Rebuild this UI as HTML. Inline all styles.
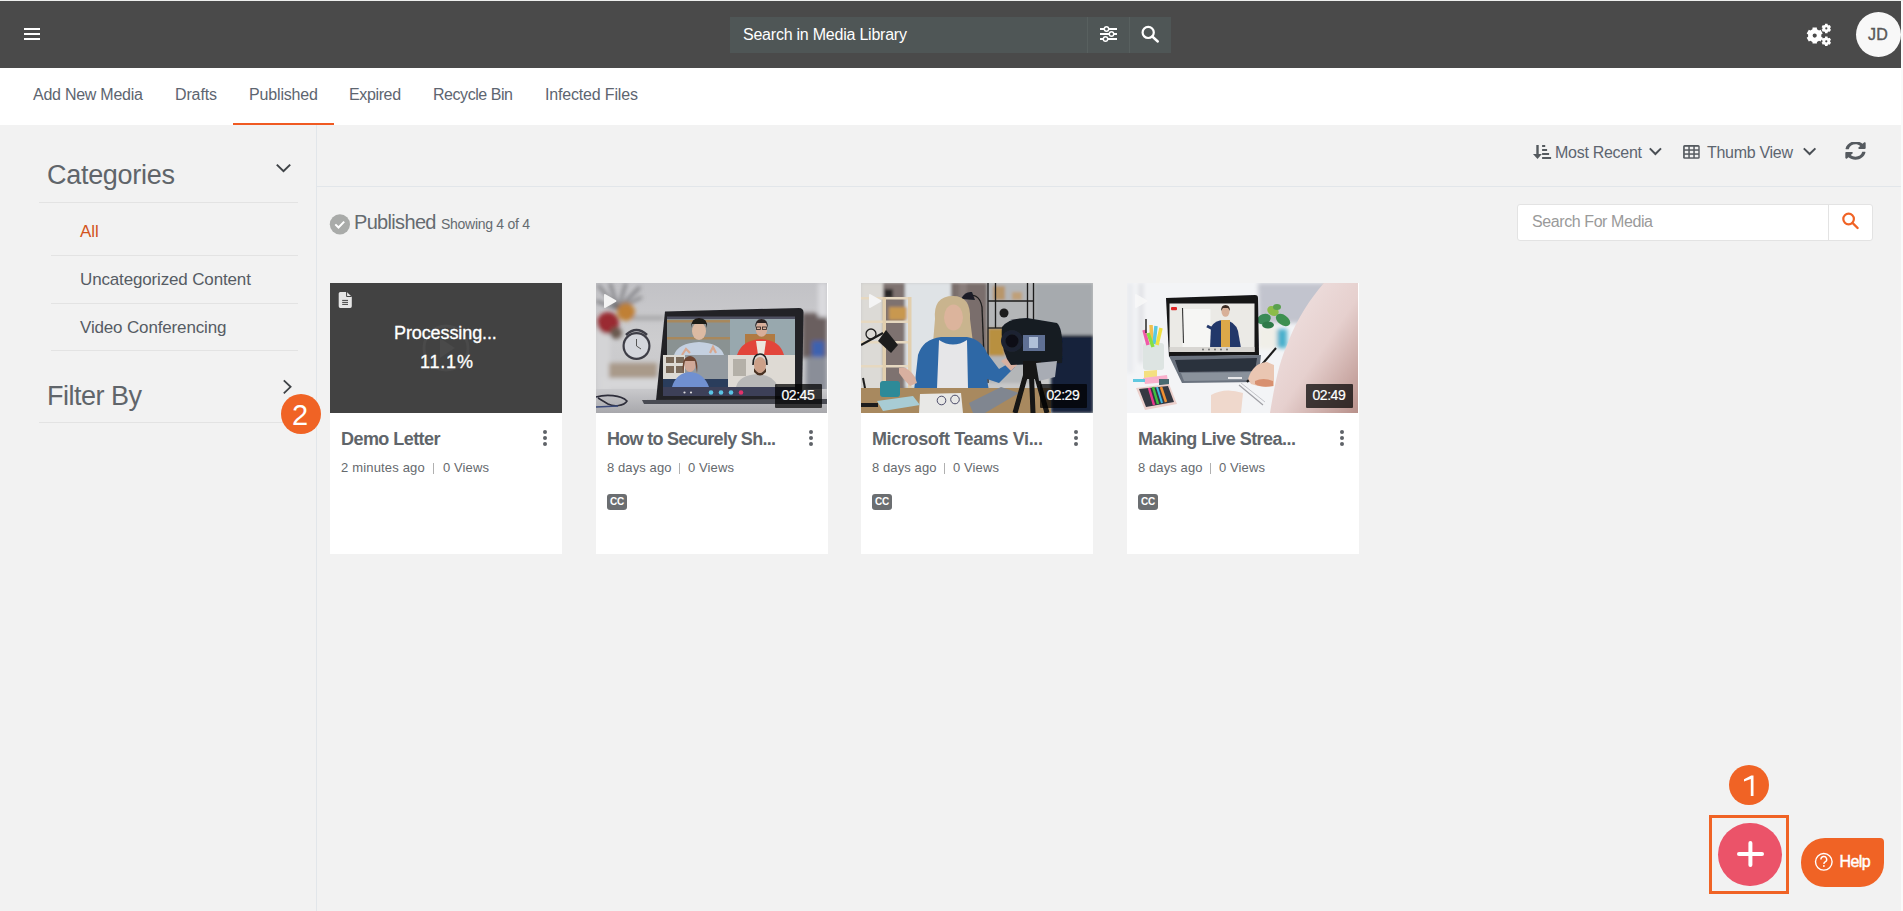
<!DOCTYPE html>
<html><head><meta charset="utf-8">
<style>
*{margin:0;padding:0;box-sizing:border-box}
html,body{width:1903px;height:911px;overflow:hidden;background:#fafafa}
body{font-family:"Liberation Sans",sans-serif;position:relative}
.a{position:absolute}
.t{position:absolute;white-space:nowrap;line-height:1}
#page{position:absolute;left:0;top:0;width:1901px;height:911px;background:#f2f2f2;overflow:hidden}
#topline{position:absolute;left:0;top:0;width:1903px;height:1px;background:#eef0ee}
#hdr{position:absolute;left:0;top:1px;width:1901px;height:67px;background:#4a4a4a}
#tabs{position:absolute;left:0;top:68px;width:1901px;height:57px;background:#fff}
.tab{font-size:16px;color:#5d6570;top:86.5px}
.sep{position:absolute;height:1px;background:#e3e3e3}
.card{position:absolute;top:283px;width:232px;height:271px;background:#fff}
.thumb{position:absolute;left:0;top:0;width:232px;height:130px;overflow:hidden}
.ctitle{font-size:18px;font-weight:700;color:#60656a;top:146.9px;left:11px}
.meta{font-size:13px;color:#65696d;top:178.3px;left:11px}
.kebab{position:absolute;top:147px;width:4px;height:16px}
.kebab i{position:absolute;left:0;width:4.2px;height:4.2px;border-radius:50%;background:#5f6368}
.pipe{position:absolute;top:180px;width:1.3px;height:10.5px;background:#b0b0b0}
.cc{position:absolute;left:11px;top:211px;width:20px;height:16px;border-radius:3px;background:#6b6e71;color:#fff;font-size:10px;font-weight:700;line-height:16px;text-align:center;letter-spacing:-0.3px}
.dur{position:absolute;top:101px;height:24px;background:rgba(0,0,0,.72);border-radius:1px}
.dur span{position:absolute;left:6.5px;top:3.8px;font-size:14px;color:#fff;line-height:1;letter-spacing:-0.45px;-webkit-text-stroke:0.2px #fff}
</style></head><body>
<div id="page">
  <div id="hdr">
    <!-- hamburger -->
    <div class="a" style="left:24px;top:27px;width:16px;height:2px;background:#fff"></div>
    <div class="a" style="left:24px;top:32px;width:16px;height:2px;background:#fff"></div>
    <div class="a" style="left:24px;top:37px;width:16px;height:2px;background:#fff"></div>
    <!-- search -->
    <div class="a" style="left:730px;top:16px;width:441px;height:36px;background:#4f5656"></div>
    <div class="a" style="left:1087px;top:16px;width:1px;height:36px;background:#58605f"></div>
    <div class="a" style="left:1129px;top:16px;width:1px;height:36px;background:#58605f"></div>
    <div class="t" style="left:743px;top:25.5px;font-size:16px;color:#fff;letter-spacing:-0.23px">Search in Media Library</div>
    <svg class="a" style="left:1096px;top:20px" width="26" height="26" viewBox="1096 21 26 26">
      <g stroke="#fff" stroke-width="2" fill="none">
        <line x1="1100" y1="29" x2="1117" y2="29"/><line x1="1100" y1="34" x2="1117" y2="34"/><line x1="1100" y1="39" x2="1117" y2="39"/>
      </g>
      <g fill="#4f5656" stroke="#fff" stroke-width="1.4">
        <circle cx="1106.5" cy="29" r="2.2"/><circle cx="1111.5" cy="34" r="2.2"/><circle cx="1105.5" cy="39" r="2.2"/>
      </g>
    </svg>
    <svg class="a" style="left:1138px;top:20px" width="26" height="26" viewBox="1138 21 26 26">
      <circle cx="1148.2" cy="32.4" r="5.6" fill="none" stroke="#fff" stroke-width="2.2"/>
      <line x1="1152.3" y1="36.5" x2="1157.8" y2="41.5" stroke="#fff" stroke-width="2.4" stroke-linecap="round"/>
    </svg>
    <svg class="a" style="left:1800px;top:16px" width="40" height="40" viewBox="1800 17 40 40">
      <g fill="#fff">
        <path fill-rule="evenodd" d="M1812.43,29.30 L1812.55,27.58 L1816.85,27.58 L1816.97,29.30 L1819.02,30.48 L1820.57,29.73 L1822.72,33.45 L1821.29,34.41 L1821.29,36.79 L1822.72,37.75 L1820.57,41.47 L1819.02,40.72 L1816.97,41.90 L1816.85,43.62 L1812.55,43.62 L1812.43,41.90 L1810.38,40.72 L1808.83,41.47 L1806.68,37.75 L1808.11,36.79 L1808.11,34.41 L1806.68,33.45 L1808.83,29.73 L1810.38,30.48Z M1816.80,35.60 A2.1,2.1 0 1,0 1812.60,35.60 A2.1,2.1 0 1,0 1816.80,35.60Z M1824.98,24.73 L1825.03,23.67 L1827.57,23.67 L1827.62,24.73 L1828.82,25.42 L1829.76,24.94 L1831.03,27.13 L1830.14,27.71 L1830.14,29.09 L1831.03,29.67 L1829.76,31.86 L1828.82,31.38 L1827.62,32.07 L1827.57,33.13 L1825.03,33.13 L1824.98,32.07 L1823.78,31.38 L1822.84,31.86 L1821.57,29.67 L1822.46,29.09 L1822.46,27.71 L1821.57,27.13 L1822.84,24.94 L1823.78,25.42Z M1827.40,28.40 A1.1,1.1 0 1,0 1825.20,28.40 A1.1,1.1 0 1,0 1827.40,28.40Z M1824.98,37.63 L1825.03,36.57 L1827.57,36.57 L1827.62,37.63 L1828.82,38.32 L1829.76,37.84 L1831.03,40.03 L1830.14,40.61 L1830.14,41.99 L1831.03,42.57 L1829.76,44.76 L1828.82,44.28 L1827.62,44.97 L1827.57,46.03 L1825.03,46.03 L1824.98,44.97 L1823.78,44.28 L1822.84,44.76 L1821.57,42.57 L1822.46,41.99 L1822.46,40.61 L1821.57,40.03 L1822.84,37.84 L1823.78,38.32Z M1827.40,41.30 A1.1,1.1 0 1,0 1825.20,41.30 A1.1,1.1 0 1,0 1827.40,41.30Z"/>
      </g>
    </svg>
    <div class="a" style="left:1855.5px;top:11px;width:45px;height:45px;border-radius:50%;background:#f8f8f8"></div>
    <div class="t" style="left:1868px;top:25.5px;font-size:16px;color:#595959;letter-spacing:0.3px;-webkit-text-stroke:0.4px #595959">JD</div>
  </div>
  <div id="tabs">
    <div class="t tab" style="left:33px;top:18.5px;letter-spacing:-0.25px">Add New Media</div>
    <div class="t tab" style="left:175px;top:18.5px;letter-spacing:-0.13px">Drafts</div>
    <div class="t tab" style="left:249px;top:18.5px;letter-spacing:-0.16px">Published</div>
    <div class="t tab" style="left:349px;top:18.5px;letter-spacing:-0.37px">Expired</div>
    <div class="t tab" style="left:433px;top:18.5px;letter-spacing:-0.45px">Recycle Bin</div>
    <div class="t tab" style="left:545px;top:18.5px;letter-spacing:-0.17px">Infected Files</div>
    <div class="a" style="left:233px;top:55px;width:101px;height:2px;background:#f05a22"></div>
  </div>
  <!-- sidebar -->
  <div class="a" style="left:316px;top:125px;width:1px;height:786px;background:#e2e6ea"></div>
  <div class="t" style="left:47px;top:162px;font-size:27px;color:#60656a;letter-spacing:-0.29px">Categories</div>
  <div class="sep" style="left:39px;top:202px;width:259px"></div>
  <div class="t" style="left:80px;top:223.3px;font-size:17px;color:#d3541c">All</div>
  <div class="sep" style="left:51px;top:255px;width:247px"></div>
  <div class="t" style="left:80px;top:270.7px;font-size:17px;color:#565c64;letter-spacing:-0.15px">Uncategorized Content</div>
  <div class="sep" style="left:51px;top:303px;width:247px"></div>
  <div class="t" style="left:80px;top:318.6px;font-size:17px;color:#565c64;letter-spacing:-0.15px">Video Conferencing</div>
  <div class="sep" style="left:51px;top:350px;width:247px"></div>
  <div class="t" style="left:47px;top:383px;font-size:27px;color:#60656a;letter-spacing:-0.5px">Filter By</div>
  <div class="sep" style="left:39px;top:422px;width:259px"></div>
  <svg class="a" style="left:270px;top:155px" width="30" height="25" viewBox="270 155 30 25"><polyline points="276.8,164.6 283.5,171.2 290.2,164.6" fill="none" stroke="#3f4347" stroke-width="2"/></svg>
  <svg class="a" style="left:276px;top:374px" width="24" height="24" viewBox="276 374 24 24"><polyline points="283.8,380.3 290.6,386.8 283.8,393.3" fill="none" stroke="#3f4347" stroke-width="1.8"/></svg>

  <!-- toolbar -->
  <div class="a" style="left:316px;top:186px;width:1585px;height:1px;background:#e2e6ea"></div>
  <div class="t" style="left:1555px;top:144.5px;font-size:16px;color:#5d6570;letter-spacing:-0.28px">Most Recent</div>
  <div class="t" style="left:1707px;top:144.5px;font-size:16px;color:#5d6570;letter-spacing:-0.29px">Thumb View</div>
  <svg class="a" style="left:1528px;top:138px" width="30" height="26" viewBox="1528 138 30 26">
    <g fill="#555a5f">
      <rect x="1536.3" y="145" width="2.4" height="11"/>
      <polygon points="1533,154 1541.9,154 1537.5,158.9"/>
      <rect x="1542.1" y="145" width="3.1" height="2"/>
      <rect x="1542.1" y="149" width="5" height="2"/>
      <rect x="1542.1" y="153" width="7" height="2"/>
      <rect x="1542.1" y="157" width="9" height="2"/>
    </g>
  </svg>
    <svg class="a" style="left:1640px;top:140px" width="30" height="25" viewBox="1640 140 30 25"><polyline points="1649.8,148.4 1655.4,154 1661,148.4" fill="none" stroke="#4a4f55" stroke-width="2"/></svg>
  <svg class="a" style="left:1795px;top:140px" width="30" height="25" viewBox="1795 140 30 25"><polyline points="1803.8,148.4 1809.6,154 1815.4,148.4" fill="none" stroke="#4a4f55" stroke-width="2"/></svg>
  <svg class="a" style="left:1678px;top:138px" width="30" height="26" viewBox="1678 138 30 26">
    <rect x="1683.1" y="144.9" width="16.6" height="13.9" rx="1.5" fill="#555a5f"/>
    <g fill="#f2f2f2">
      <rect x="1684.8" y="146.8" width="3.5" height="2.5"/><rect x="1689.8" y="146.8" width="3.5" height="2.5"/><rect x="1694.8" y="146.8" width="3.5" height="2.5"/>
      <rect x="1684.8" y="150.8" width="3.5" height="2.5"/><rect x="1689.8" y="150.8" width="3.5" height="2.5"/><rect x="1694.8" y="150.8" width="3.5" height="2.5"/>
      <rect x="1684.8" y="154.8" width="3.5" height="2.5"/><rect x="1689.8" y="154.8" width="3.5" height="2.5"/><rect x="1694.8" y="154.8" width="3.5" height="2.5"/>
    </g>
  </svg>
  <svg class="a" style="left:1845px;top:142px" width="21" height="18" viewBox="0 0 512 460" preserveAspectRatio="none">
    <g transform="translate(0,-26) scale(1,0.95)"><path fill="#555a5f" d="M370.72 133.28C339.458 104.008 298.888 87.962 255.848 88c-77.458.068-144.328 53.178-162.791 126.85-1.344 5.363-6.122 9.15-11.651 9.15H24.103c-7.498 0-13.194-6.807-11.807-14.176C33.933 94.924 134.813 8 256 8c66.448 0 126.791 26.136 171.315 68.685L463.03 40.97C478.149 25.851 504 36.559 504 57.941V192c0 13.255-10.745 24-24 24H345.941c-21.382 0-32.090-25.851-16.971-40.971l41.75-41.749zM32 296h134.059c21.382 0 32.090 25.851 16.971 40.971l-41.75 41.75c31.262 29.273 71.835 45.319 114.876 45.280 77.418-.07 144.315-53.144 162.787-126.849 1.344-5.363 6.122-9.150 11.651-9.150h57.304c7.498 0 13.194 6.807 11.807 14.176C478.067 417.076 377.187 504 256 504c-66.448 0-126.791-26.136-171.315-68.685L48.970 471.030C33.851 486.149 8 475.441 8 454.059V320c0-13.255 10.745-24 24-24z"/></g>
  </svg>

  <svg class="a" style="left:326px;top:210px" width="30" height="30" viewBox="326 210 30 30"><circle cx="339.9" cy="224.3" r="10.1" fill="#a9aba9"/><polyline points="335.3,224.4 338.5,227.5 344.2,221.6" fill="none" stroke="#fff" stroke-width="2"/></svg>
  <div class="t" style="left:354px;top:212.1px;font-size:20px;color:#656b70;letter-spacing:-0.67px">Published</div>
  <div class="t" style="left:441px;top:217.1px;font-size:14px;color:#656b70;letter-spacing:-0.28px">Showing 4 of 4</div>

  <div class="a" style="left:1517px;top:204px;width:356px;height:37px;background:#fff;border:1px solid #e3e3e3;border-radius:3px"></div>
  <div class="a" style="left:1828px;top:205px;width:1px;height:35px;background:#e3e3e3"></div>
  <div class="t" style="left:1532px;top:214.2px;font-size:16px;color:#9a9a9a;letter-spacing:-0.41px">Search For Media</div>
  <svg class="a" style="left:1838px;top:208px" width="26" height="26" viewBox="1838 208 26 26"><circle cx="1848.6" cy="219" r="5.3" fill="none" stroke="#f06325" stroke-width="2.2"/><line x1="1852.6" y1="223" x2="1857.6" y2="228" stroke="#f06325" stroke-width="2.4" stroke-linecap="round"/></svg>

  <!-- cards -->
  <div class="card" style="left:330px">
    <div class="thumb" style="background:#424242">
      <svg class="a" style="left:0;top:0" width="232" height="130" viewBox="0 0 232 130">
        <circle cx="116" cy="65" r="22" fill="none" stroke="#4a4a4a" stroke-width="3"/>
        <polygon points="110,55 110,75 125,65" fill="#4a4a4a"/>
        <g transform="translate(-330,-283)">
          <path d="M340.3,291.9 h6.5 l5,4.8 v9.6 a1.6,1.6 0 0 1 -1.6,1.6 h-9.9 a1.6,1.6 0 0 1 -1.6,-1.6 v-12.8 a1.6,1.6 0 0 1 1.6,-1.6z" fill="#e6e6e6"/>
          <path d="M346.6,291.9 v4.6 h5" fill="none" stroke="#424242" stroke-width="1"/>
          <g stroke="#424242" stroke-width="1"><line x1="342.2" y1="300.4" x2="348" y2="300.4"/><line x1="342.2" y1="302.4" x2="348" y2="302.4"/><line x1="342.2" y1="304.4" x2="348" y2="304.4"/></g>
        </g>
      </svg>
      <div class="t" style="left:64px;top:40.9px;font-size:18px;color:#fff;letter-spacing:-0.1px;-webkit-text-stroke:0.3px #fff">Processing...</div>
      <div class="t" style="left:90px;top:69.6px;font-size:18px;color:#fff;letter-spacing:0.8px;-webkit-text-stroke:0.3px #fff">11.1%</div>
    </div>
    <div class="t ctitle" style="letter-spacing:-0.55px">Demo Letter</div>
    <div class="kebab" style="left:213px"><i style="top:0"></i><i style="top:6px"></i><i style="top:12px"></i></div>
    <div class="t meta" style="letter-spacing:0.17px">2 minutes ago</div><div class="pipe" style="left:103px"></div><div class="t meta" style="left:113px;letter-spacing:0.1px">0 Views</div>
  </div>
  <div class="card" style="left:596px">
    <div class="thumb" style="background:#888;width:231px">
<svg class="a" style="left:0;top:0" width="231" height="130" viewBox="0 0 231 130">
  <defs>
    <linearGradient id="t2wall" x1="0" y1="0" x2="0" y2="1"><stop offset="0" stop-color="#c2c2c6"/><stop offset="0.45" stop-color="#cdcdcf"/><stop offset="1" stop-color="#c4c4c6"/></linearGradient>
    <linearGradient id="t2desk" x1="0" y1="0" x2="0" y2="1"><stop offset="0" stop-color="#c9c9cc"/><stop offset="1" stop-color="#a8a8ac"/></linearGradient>
    <filter id="t2b" x="-10%" y="-10%" width="120%" height="120%"><feGaussianBlur stdDeviation="2.2"/></filter>
    <filter id="t2s" x="-10%" y="-10%" width="120%" height="120%"><feGaussianBlur stdDeviation="0.55"/></filter>
  </defs>
  <rect width="231" height="130" fill="url(#t2wall)"/>
  <g filter="url(#t2b)">
    <g stroke="#6e6e72" stroke-width="2.5" fill="none">
      <path d="M22,26 L2,2"/><path d="M22,26 L14,0"/><path d="M22,26 L30,0"/><path d="M22,26 L44,4"/><path d="M22,26 L0,18"/><path d="M22,26 L46,14"/>
    </g>
    <rect x="0" y="40" width="14" height="70" fill="#d4d4d6"/>
    <rect x="36" y="33" width="32" height="4" fill="#a4a4a6"/>
    <circle cx="12" cy="40" r="11" fill="#9a2c32"/>
    <circle cx="30" cy="29" r="9" fill="#c08035"/>
    <circle cx="20" cy="50" r="6" fill="#6a5a50"/>
    <rect x="13" y="80" width="48" height="15" fill="#a99a8a"/>
    <rect x="5" y="95" width="60" height="12" fill="#d6d6d8"/>
    <rect x="206" y="30" width="25" height="45" fill="#6a5e5e"/>
    <rect x="222" y="0" width="9" height="34" fill="#dadade"/>
    <rect x="216" y="58" width="12" height="20" fill="#3c62b0"/>
    <rect x="210" y="74" width="21" height="40" fill="#8a8e98"/>
  </g>
  <g filter="url(#t2s)">
    <circle cx="40.5" cy="63" r="14" fill="#3e3e46"/>
    <circle cx="40.5" cy="63" r="11.8" fill="#d4d6dc"/>
    <path d="M40.5,56 L40.5,63 L45,66" stroke="#555" stroke-width="1" fill="none"/>
    <path d="M30,52 Q40.5,42 51,52" stroke="#3e3e46" stroke-width="2.5" fill="none"/>
  </g>
  <rect x="0" y="106" width="231" height="24" fill="url(#t2desk)"/>
  <g filter="url(#t2s)" fill="none" stroke="#2e2e3a" stroke-width="1.6">
    <path d="M0,114 C10,111 25,112 31,118 C28,123 18,124 12,121 L2,115"/>
    <path d="M0,124 L22,123" stroke="#3a4a7a"/>
  </g>
  <!-- laptop -->
  <path d="M69,28.5 L203,25 Q207.5,25 207.5,29.5 L206,117 L60,117.5 Z" fill="#222328" filter="url(#t2s)"/>
  <path d="M46,117 L231,116 L231,121 L48,121Z" fill="#4a4b52" filter="url(#t2s)"/>
  <g filter="url(#t2s)">
    <rect x="71" y="33.5" width="128" height="2.5" fill="#4e5060"/>
    <!-- top-left panel -->
    <rect x="71" y="36" width="63" height="36" fill="#8a9292"/>
    <rect x="71" y="37" width="63" height="2.5" fill="#a8885c"/>
    <rect x="71" y="54" width="63" height="2.5" fill="#a8885c"/>
    <path d="M78,72 Q82,60 103,59 Q124,60 128,72Z" fill="#c4d0e0"/>
    <ellipse cx="103" cy="48" rx="7" ry="9" fill="#dcbaa2"/>
    <path d="M95,45 Q95,35 103,35 Q112,35 111,45 L110,41 L96,41Z" fill="#1e1a18"/>
    <path d="M86,72 L90,66 L94,70 M114,70 L117,64 L120,70" stroke="#d8a890" stroke-width="2.2" fill="none"/>
    <!-- top-right panel -->
    <rect x="134" y="36" width="65" height="36" fill="#98a8ae"/>
    <rect x="149" y="51" width="30" height="21" fill="#b07a42"/>
    <path d="M141,72 Q146,57 165,56 Q184,57 188,72Z" fill="#e2443a"/>
    <path d="M160,58 L170,58 L168,72 L162,72Z" fill="#ece6de"/>
    <ellipse cx="165.5" cy="46" rx="5.8" ry="7.8" fill="#d8ae9a"/>
    <path d="M159,45 Q159,36 165.5,36 Q172,36 172,45 L170,40 L161,40Z" fill="#2a2020"/>
    <g fill="none" stroke="#2a2020" stroke-width="0.8"><rect x="160.5" y="44" width="4" height="2.6"/><rect x="166.5" y="44" width="4" height="2.6"/></g>
    <!-- bottom-left panel -->
    <rect x="71" y="72" width="61" height="32" fill="#939aa0"/>
    <rect x="67" y="72" width="22" height="25" fill="#dcdad4"/>
    <g fill="#7a6a5a"><rect x="70" y="74" width="8" height="6"/><rect x="80" y="74" width="8" height="6"/><rect x="70" y="83" width="8" height="7"/><rect x="80" y="83" width="8" height="7"/></g>
    <rect x="67" y="96" width="65" height="8" fill="#2c3c5c"/>
    <path d="M76,104 Q80,90 94,89 Q108,90 113,104Z" fill="#7090d0"/>
    <ellipse cx="94" cy="82" rx="5.5" ry="7" fill="#d0a898"/>
    <path d="M87,90 Q85,74 94,73 Q103,74 101,90 L99,78 L89,78Z" fill="#6e4430"/>
    <!-- bottom-right panel -->
    <rect x="132" y="72" width="67" height="32" fill="#dedad4"/>
    <rect x="137" y="76" width="13" height="17" fill="#b4b0a8"/>
    <path d="M140,104 Q143,92 162,91 Q178,92 182,104Z" fill="#b8b8b8"/>
    <ellipse cx="164" cy="82" rx="6" ry="8" fill="#cca088"/>
    <path d="M158,85 Q164,95 170,85 L170,89 Q164,96 158,89Z" fill="#4a3020"/>
    <path d="M157,82 Q157,71 164,71 Q171,71 171,82" fill="none" stroke="#222" stroke-width="1.6"/>
    <!-- toolbar -->
    <rect x="67" y="104" width="132" height="9" fill="#3d3f58"/>
    <circle cx="115" cy="109.5" r="2.3" fill="#5ac4e4"/>
    <circle cx="125" cy="109.5" r="2.3" fill="#5ac4e4"/>
    <circle cx="135" cy="109.5" r="2.3" fill="#5ac4e4"/>
    <circle cx="145" cy="109.5" r="2.3" fill="#e2306a"/>
    <circle cx="88.5" cy="109.5" r="1.1" fill="#ddd"/>
    <circle cx="95" cy="109.5" r="1.1" fill="#ddd"/>
  </g>
  <path d="M8,12 L8,24 Q8,25.5 9.5,24.8 L20,18.8 Q21,18 20,17.2 L9.5,11.2 Q8,10.5 8,12Z" fill="#f4f4f4"/>
</svg>
      <div class="dur" style="left:179px;width:47px"><span>02:45</span></div>
    </div>
    <div class="t ctitle" style="letter-spacing:-0.7px">How to Securely Sh...</div>
    <div class="kebab" style="left:213px"><i style="top:0"></i><i style="top:6px"></i><i style="top:12px"></i></div>
    <div class="t meta" style="letter-spacing:0.1px">8 days ago</div><div class="pipe" style="left:83px"></div><div class="t meta" style="left:92px;letter-spacing:0.1px">0 Views</div>
    <div class="cc">CC</div>
  </div>
  <div class="card" style="left:861px">
    <div class="thumb" style="background:#777">
<svg class="a" style="left:0;top:0" width="232" height="130" viewBox="0 0 232 130">
  <defs>
    <filter id="t3b" x="-10%" y="-10%" width="120%" height="120%"><feGaussianBlur stdDeviation="1.4"/></filter>
    <filter id="t3s" x="-10%" y="-10%" width="120%" height="120%"><feGaussianBlur stdDeviation="0.7"/></filter>
  </defs>
  <rect width="232" height="130" fill="#c8c8c8"/>
  <g filter="url(#t3b)">
    <rect x="0" y="0" width="22" height="110" fill="#dcdad6"/>
    <rect x="22" y="0" width="22" height="110" fill="#7e7270"/>
    <rect x="44" y="0" width="46" height="104" fill="#dfe3e6"/>
    <rect x="90" y="0" width="36" height="90" fill="#7a6e6c"/>
    <rect x="98" y="0" width="8" height="90" fill="#8a7e7c"/>
    <rect x="126" y="0" width="48" height="100" fill="#b4b6b8"/>
    <rect x="174" y="0" width="58" height="56" fill="#a6aaae"/>
    <rect x="190" y="52" width="42" height="78" fill="#18213a"/>
    <rect x="28" y="24" width="18" height="13" fill="#c89850"/>
    <rect x="23" y="6" width="9" height="9" fill="#262626"/>
    <rect x="132" y="3" width="12" height="14" fill="#b8966a"/>
    <rect x="151" y="9" width="10" height="8" fill="#c0a078"/>
    <rect x="127" y="45" width="17" height="28" fill="#b89040"/>
  </g>
  <g filter="url(#t3s)">
    <g fill="#e6d8c0"><rect x="0" y="14" width="50" height="2.5"/><rect x="0" y="37.5" width="50" height="2.5"/><rect x="0" y="58" width="50" height="2.5"/><rect x="0" y="82" width="50" height="2.5"/></g>
    <rect x="21.5" y="14" width="3.5" height="96" fill="#e2cfae"/>
    <rect x="47" y="14" width="3.5" height="96" fill="#e2cfae"/>
    <g stroke="#1c1c1c" stroke-width="1.3" fill="none">
      <line x1="127" y1="0" x2="127" y2="100"/><line x1="134.5" y1="0" x2="134.5" y2="45"/><line x1="166.5" y1="0" x2="166.5" y2="40"/><line x1="172.5" y1="0" x2="172.5" y2="40"/>
      <line x1="127" y1="18" x2="173" y2="18"/><line x1="127" y1="45" x2="152" y2="45"/>
      <path d="M104,14 Q118,8 121,24 L124,100"/>
    </g>
    <circle cx="143" cy="30" r="4.5" fill="#1c1c1c"/>
    <path d="M100,16 Q104,8 111,9 L114,17Z" fill="#1a1f28"/>
    <!-- lamp -->
    <path d="M17,58 L25,47 L37,62 L30,70Z" fill="#1e1e1e"/>
    <path d="M0,62 L22,50" stroke="#1e1e1e" stroke-width="2"/>
    <circle cx="10" cy="51" r="5" fill="none" stroke="#1e1e1e" stroke-width="1.3"/>
    <path d="M2,95 L5,110" stroke="#1e1e1e" stroke-width="2"/>
    <rect x="0" y="108" width="17" height="12" fill="#1a1a1a"/>
    <!-- woman -->
    <path d="M74,36 Q72,13 92,13 Q110,13 109,36 L112,60 L72,60Z" fill="#c9b48e"/>
    <ellipse cx="92.5" cy="34.5" rx="9.5" ry="13" fill="#dcb49c"/>
    <path d="M53,108 L57,72 Q62,56 80,54 L106,54 Q120,56 126,70 L138,86 L150,79 L154,84 L138,100 L126,96 L128,108Z" fill="#2f67a6"/>
    <path d="M78,57 Q92,66 106,57 L107,105 L76,105Z" fill="#e6e6e8"/>
    <path d="M38,85 Q46,82 54,94 L56,100 L49,103 Q42,96 38,90Z" fill="#d8b0a0"/>
    <path d="M140,78 Q150,70 158,80 L150,88Z" fill="#d8b0a0"/>
    <!-- desk -->
    <rect x="0" y="105" width="190" height="25" fill="#a8895e"/>
    <rect x="0" y="120" width="17" height="4" fill="#1a1a1a"/>
    <path d="M59,111 L100,110 L102,130 L58,130Z" fill="#e8e8e6"/>
    <circle cx="80.5" cy="117.5" r="4.3" fill="none" stroke="#3a3a5a" stroke-width="0.9"/>
    <circle cx="94" cy="116.5" r="4.3" fill="none" stroke="#3a3a5a" stroke-width="0.9"/>
    <path d="M16,118 L52,113 L59,122 L22,128Z" fill="#a8ccd4"/>
    <rect x="19" y="98" width="20" height="16" rx="3" fill="#2e8a98"/>
    <path d="M108,120 L140,104 L158,110 L124,130 L112,130Z" fill="#808690"/>
    <!-- camera -->
    <path d="M141,44 Q148,35 166,35 L196,40 Q203,46 201,80 L150,82 Q139,68 141,44Z" fill="#141a24"/>
    <circle cx="151" cy="58" r="11" fill="#1e2430"/>
    <circle cx="151" cy="58" r="6.5" fill="#0e1016"/>
    <rect x="162" y="52" width="22" height="16" fill="#5e7094"/>
    <rect x="168" y="54" width="9" height="11" fill="#b0c0d8"/>
    <path d="M172,80 L186,130 M168,80 L154,130 M170,80 L172,130" stroke="#121212" stroke-width="5"/>
    <rect x="162" y="78" width="18" height="18" fill="#121212"/>
    <path d="M175,80 L196,78 L194,94 L178,98Z" fill="#a8acb4"/>
  </g>
  <path d="M8,12 L8,24 Q8,25.5 9.5,24.8 L20,18.8 Q21,18 20,17.2 L9.5,11.2 Q8,10.5 8,12Z" fill="#f4f4f4"/>
</svg>
      <div class="dur" style="left:179px;width:47px"><span>02:29</span></div>
    </div>
    <div class="t ctitle" style="letter-spacing:-0.37px">Microsoft Teams Vi...</div>
    <div class="kebab" style="left:213px"><i style="top:0"></i><i style="top:6px"></i><i style="top:12px"></i></div>
    <div class="t meta" style="letter-spacing:0.1px">8 days ago</div><div class="pipe" style="left:83px"></div><div class="t meta" style="left:92px;letter-spacing:0.1px">0 Views</div>
    <div class="cc">CC</div>
  </div>
  <div class="card" style="left:1127px">
    <div class="thumb" style="background:#ccc;width:231px">
<svg class="a" style="left:0;top:0" width="231" height="130" viewBox="0 0 231 130">
  <defs>
    <filter id="t4b" x="-10%" y="-10%" width="120%" height="120%"><feGaussianBlur stdDeviation="2"/></filter>
    <filter id="t4c" x="-20%" y="-20%" width="140%" height="140%"><feGaussianBlur stdDeviation="3.5"/></filter>
    <filter id="t4s" x="-10%" y="-10%" width="120%" height="120%"><feGaussianBlur stdDeviation="0.6"/></filter>
    <linearGradient id="t4p" x1="0" y1="0" x2="1" y2="1"><stop offset="0" stop-color="#f2e6e6"/><stop offset="0.55" stop-color="#e6d0ce"/><stop offset="1" stop-color="#b8908a"/></linearGradient>
  </defs>
  <rect width="231" height="130" fill="#f3f4f6"/>
  <g filter="url(#t4b)">
    <rect x="12" y="0" width="4" height="80" fill="#dcdee2"/>
    <rect x="0" y="0" width="6" height="90" fill="#e8eaee"/>
    <path d="M131,0 L200,0 L196,40 L132,40Z" fill="#c2c4ce"/>
    <rect x="198" y="0" width="33" height="6" fill="#e4a878"/>
    <rect x="131" y="44" width="19" height="22" fill="#f0efe8"/>
    <rect x="150" y="46" width="10" height="19" fill="#4ab0cc"/>
  </g>
  <g filter="url(#t4s)">
    <ellipse cx="137" cy="36" rx="7" ry="5" transform="rotate(-20 137 36)" fill="#3a8a58"/>
    <ellipse cx="146" cy="28" rx="6" ry="4.5" transform="rotate(30 146 28)" fill="#8cbc48"/>
    <ellipse cx="156" cy="37" rx="8" ry="5" transform="rotate(35 156 37)" fill="#3e9050"/>
    <ellipse cx="141" cy="42" rx="6" ry="3.5" fill="#2e7a48"/>
    <ellipse cx="150" cy="24" rx="4" ry="3" fill="#5aa050"/>
    <!-- jar + pens -->
    <rect x="16" y="60" width="21" height="27" rx="3" fill="#dde4e2"/>
    <path d="M17,47 L21,62" stroke="#f05aa8" stroke-width="3.5"/>
    <path d="M24,42 L25,60" stroke="#f0c050" stroke-width="3.5"/>
    <path d="M29,43 L27,61" stroke="#58c8e0" stroke-width="3.5"/>
    <path d="M34,45 L30,62" stroke="#f0e040" stroke-width="3.5"/>
    <path d="M21,50 L26,64" stroke="#88e040" stroke-width="3.5"/>
    <path d="M19,36 L19,50" stroke="#333" stroke-width="1.6"/>
    <!-- sticky notes -->
    <path d="M17,88 L30,87 L30,94 L17,95Z" fill="#f4e080"/>
    <path d="M16,95 L40,92 L41,99 L18,101Z" fill="#f8b0cc"/>
    <rect x="6" y="96" width="12" height="3" fill="#60c8e0"/>
    <rect x="32" y="96" width="10" height="6" fill="#4a6a70"/>
    <!-- phone -->
    <path d="M9,105 L42,101 L50,121 L18,127Z" fill="#ecd0cc"/>
    <path d="M12,106 L41,103 L47,119 L19,124Z" fill="#343842"/>
    <path d="M22,105 L27,122" stroke="#e8388a" stroke-width="2.5"/>
    <path d="M26,104 L31,121" stroke="#40c040" stroke-width="2.5"/>
    <path d="M30,104 L35,120" stroke="#40b8e0" stroke-width="2"/>
    <path d="M34,104 L39,119" stroke="#f09030" stroke-width="2.5"/>
    <!-- laptop -->
    <path d="M39,15 L128,12 Q131,12 131,15 L132,72 L42,74 Z" fill="#141418"/>
    <rect x="42.5" y="20.5" width="85" height="48.5" fill="#ebeae6"/>
    <rect x="55.5" y="26" width="28" height="38" fill="#f6f6f4"/>
    <line x1="55.5" y1="25" x2="56.5" y2="60" stroke="#333" stroke-width="1.1"/>
    <rect x="44" y="24" width="6" height="3.2" rx="1" fill="#e02828"/>
    <path d="M83,65 L84,44 Q88,37 97,37 Q108,38 111,48 L114,65Z" fill="#24386a"/>
    <rect x="94" y="37" width="9" height="27" fill="#dca848"/>
    <path d="M86,46 L80,43" stroke="#24386a" stroke-width="3"/>
    <ellipse cx="98.5" cy="28.5" rx="4" ry="5.2" fill="#d8b098"/>
    <path d="M94,28 Q94,22 98.5,22 Q103,22 103,28 L101,25 L96,25Z" fill="#3a2a22"/>
    <rect x="42.5" y="64" width="85" height="5" fill="#d8d6d2"/>
    <g fill="#666"><circle cx="76" cy="66.5" r="0.9"/><circle cx="82" cy="66.5" r="0.9"/><circle cx="88" cy="66.5" r="0.9"/><circle cx="94" cy="66.5" r="0.9"/><circle cx="100" cy="66.5" r="0.9"/></g>
    <path d="M42,73 L134,72 L131,99 L55,100Z" fill="#6a727e"/>
    <path d="M48,77 L130,75 L128,88 L52,89Z" fill="#2c303c"/>
    <path d="M54,90 L128,89 L127,97 L57,98Z" fill="#8a929c"/>
    <rect x="101" y="94" width="14" height="2" fill="#e8e8ea"/>
  </g>
  <!-- person shoulder -->
  <path d="M197,0 C184,15 170,35 160,62 C152,80 148,100 143,130 L231,130 L231,0Z" fill="url(#t4p)" filter="url(#t4s)"/>
  <g filter="url(#t4s)">
    <path d="M149,65 L120,99" stroke="#1a1a1a" stroke-width="2"/>
    <path d="M121,96 Q126,80 140,79 L147,82 L147,103 Q134,105 124,101Z" fill="#eac6b2"/>
    <path d="M128,98 Q136,94 146,98 L146,103 Q134,105 128,101Z" fill="#d89070"/>
    <path d="M84,112 Q98,104 116,110 L114,130 L84,130Z" fill="#efd8cc"/>
    <path d="M112,102 L136,122" stroke="#a0a0a6" stroke-width="1.2"/>
    <path d="M114,100 L138,119" stroke="#b8b8be" stroke-width="0.8"/>
  </g>
  <path d="M8,12 L8,24 Q8,25.5 9.5,24.8 L20,18.8 Q21,18 20,17.2 L9.5,11.2 Q8,10.5 8,12Z" fill="#f8f8f8" opacity="0.85"/>
</svg>
      <div class="dur" style="left:179px;width:47px"><span>02:49</span></div>
    </div>
    <div class="t ctitle" style="letter-spacing:-0.53px">Making Live Strea...</div>
    <div class="kebab" style="left:213px"><i style="top:0"></i><i style="top:6px"></i><i style="top:12px"></i></div>
    <div class="t meta" style="letter-spacing:0.1px">8 days ago</div><div class="pipe" style="left:83px"></div><div class="t meta" style="left:92px;letter-spacing:0.1px">0 Views</div>
    <div class="cc">CC</div>
  </div>

  <!-- FAB -->
  <div class="a" style="left:1729px;top:765px;width:40px;height:40px;border-radius:50%;background:#f06325"></div>
  <svg class="a" style="left:1740px;top:772px" width="18" height="28" viewBox="1740 772 18 28"><path d="M1751.2,775.4 L1753.5,775.4 L1753.5,796.1 L1750.8,796.1 L1750.8,779 L1744,781.6 L1744,779.2Z" fill="#fff"/></svg>
  <div class="a" style="left:1709px;top:815px;width:80px;height:79px;border:3px solid #f06325"></div>
  <div class="a" style="left:1718.3px;top:822.6px;width:63.4px;height:63.4px;border-radius:50%;background:#eb5369"></div>
  <svg class="a" style="left:1730px;top:834px" width="40" height="40" viewBox="1730 834 40 40"><g stroke="#fff" stroke-width="4" stroke-linecap="round"><line x1="1739" y1="854" x2="1762" y2="854"/><line x1="1750.4" y1="843" x2="1750.4" y2="865"/></g></svg>
  <div class="a" style="left:1801px;top:838px;width:83px;height:49px;border-radius:24px 4px 24px 24px;background:#f06325"></div>
  <svg class="a" style="left:1812px;top:850px" width="24" height="24" viewBox="1812 850 24 24"><circle cx="1823.8" cy="861.8" r="8.3" fill="none" stroke="#fff" stroke-width="1.4"/><path d="M1820.9,859.4 a2.9,2.9 0 1 1 4.3,2.5 c-0.9,0.5 -1.3,1 -1.3,2" fill="none" stroke="#fff" stroke-width="1.4"/><circle cx="1823.9" cy="866" r="0.9" fill="#fff"/></svg>
  <div class="t" style="left:1839.5px;top:853.6px;font-size:16px;color:#fff;letter-spacing:-0.55px;-webkit-text-stroke:0.45px #fff">Help</div>
  <div class="a" style="left:281px;top:394px;width:40px;height:40px;border-radius:50%;background:#f06325"></div>
  <div class="t" style="left:292px;top:400.6px;font-size:29px;color:#fff">2</div>
</div>
<div id="topline"></div>
</body></html>
